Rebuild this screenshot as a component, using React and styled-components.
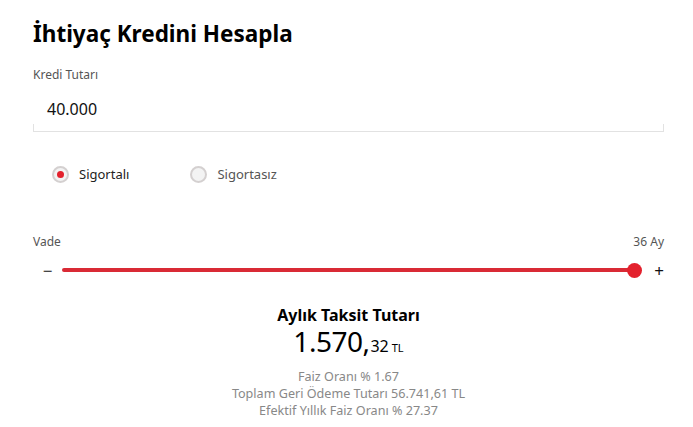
import React, { useState } from 'react';
import styled, { createGlobalStyle } from 'styled-components';

const GlobalStyle = createGlobalStyle`
  html, body {
    margin: 0;
    padding: 0;
    background: #fff;
    font-family: "Noto Sans", "Open Sans", sans-serif;
    color: #111;
  }
`;

const Page = styled.div`
  width: 631px;
  padding: 18px 0 0 33px;
`;

const Title = styled.h1`
  margin: 0;
  font-size: 22.5px;
  font-weight: 700;
  line-height: 32px;
  color: #000;
`;

const FieldLabel = styled.div`
  margin-top: 17px;
  font-size: 12px;
  line-height: 16px;
  color: #555;
`;

const AmountBox = styled.div`
  position: relative;
  height: 44px;
  padding: 4px 0 0 14px;
  border-bottom: 1px solid #e2e2e2;
  display: flex;
  align-items: center;
  font-size: 16px;
  color: #111;

  &::before,
  &::after {
    content: '';
    position: absolute;
    bottom: 0;
    width: 1px;
    height: 7px;
    background: #e2e2e2;
  }
  &::before { left: 0; }
  &::after { right: 0; }
`;

const RadioRow = styled.div`
  display: flex;
  gap: 61px;
  margin-top: 33px;
  padding-left: 19px;
`;

const RadioOption = styled.label`
  display: flex;
  align-items: center;
  gap: 10px;
  font-size: 13px;
  color: ${({ $active }) => ($active ? '#222' : '#555')};
  cursor: pointer;
`;

const RadioDot = styled.span`
  width: 13px;
  height: 13px;
  border-radius: 50%;
  border: 2px solid #d4d0d0;
  background: #f3f3f3;
  display: flex;
  align-items: center;
  justify-content: center;

  &::after {
    content: '';
    width: 7px;
    height: 7px;
    border-radius: 50%;
    background: ${({ $active }) => ($active ? '#e3212d' : 'transparent')};
  }
`;

const SliderHead = styled.div`
  display: flex;
  justify-content: space-between;
  margin-top: 51px;
  font-size: 12px;
  line-height: 16px;
  color: #555;
`;

const SliderRow = styled.div`
  display: flex;
  align-items: center;
  height: 24px;
  margin-top: 8px;
`;

const StepButton = styled.span`
  width: 29px;
  display: flex;
  justify-content: ${({ $end }) => ($end ? 'flex-end' : 'center')};
  font-size: 17px;
  color: #111;
  line-height: 1;
`;

const Track = styled.div`
  position: relative;
  flex: 1;
  height: 4px;
  border-radius: 2px;
  background: #d92a35;
`;

const Thumb = styled.span`
  position: absolute;
  right: -7px;
  top: 50%;
  width: 15px;
  height: 15px;
  margin-top: -7.5px;
  border-radius: 50%;
  background: #e3212d;
`;

const Result = styled.div`
  display: flex;
  flex-direction: column;
  align-items: center;
  margin-top: 23px;
`;

const ResultTitle = styled.div`
  font-size: 16px;
  font-weight: 700;
  line-height: 20px;
  color: #000;
`;

const Amount = styled.div`
  display: flex;
  align-items: baseline;
  line-height: 32px;
  color: #000;
`;

const Whole = styled.span`
  font-size: 28px;
  letter-spacing: -0.5px;
`;

const Cents = styled.span`
  font-size: 16px;
  margin-left: 1px;
`;

const Currency = styled.span`
  font-size: 11px;
  margin-left: 3px;
`;

const Details = styled.div`
  margin-top: 4px;
  text-align: center;
  font-size: 12.6px;
  line-height: 17px;
  color: #888;
`;

export default function App() {
  const [insured, setInsured] = useState(true);

  return (
    <Page>
      <GlobalStyle />
      <Title>İhtiyaç Kredini Hesapla</Title>
      <FieldLabel>Kredi Tutarı</FieldLabel>
      <AmountBox>40.000</AmountBox>

      <RadioRow>
        <RadioOption $active={insured} onClick={() => setInsured(true)}>
          <RadioDot $active={insured} />
          Sigortalı
        </RadioOption>
        <RadioOption $active={!insured} onClick={() => setInsured(false)}>
          <RadioDot $active={!insured} />
          Sigortasız
        </RadioOption>
      </RadioRow>

      <SliderHead>
        <span>Vade</span>
        <span>36 Ay</span>
      </SliderHead>
      <SliderRow>
        <StepButton>−</StepButton>
        <Track>
          <Thumb />
        </Track>
        <StepButton $end>+</StepButton>
      </SliderRow>

      <Result>
        <ResultTitle>Aylık Taksit Tutarı</ResultTitle>
        <Amount>
          <Whole>1.570,</Whole>
          <Cents>32</Cents>
          <Currency>TL</Currency>
        </Amount>
        <Details>
          <div>Faiz Oranı % 1.67</div>
          <div>Toplam Geri Ödeme Tutarı 56.741,61 TL</div>
          <div>Efektif Yıllık Faiz Oranı % 27.37</div>
        </Details>
      </Result>
    </Page>
  );
}
